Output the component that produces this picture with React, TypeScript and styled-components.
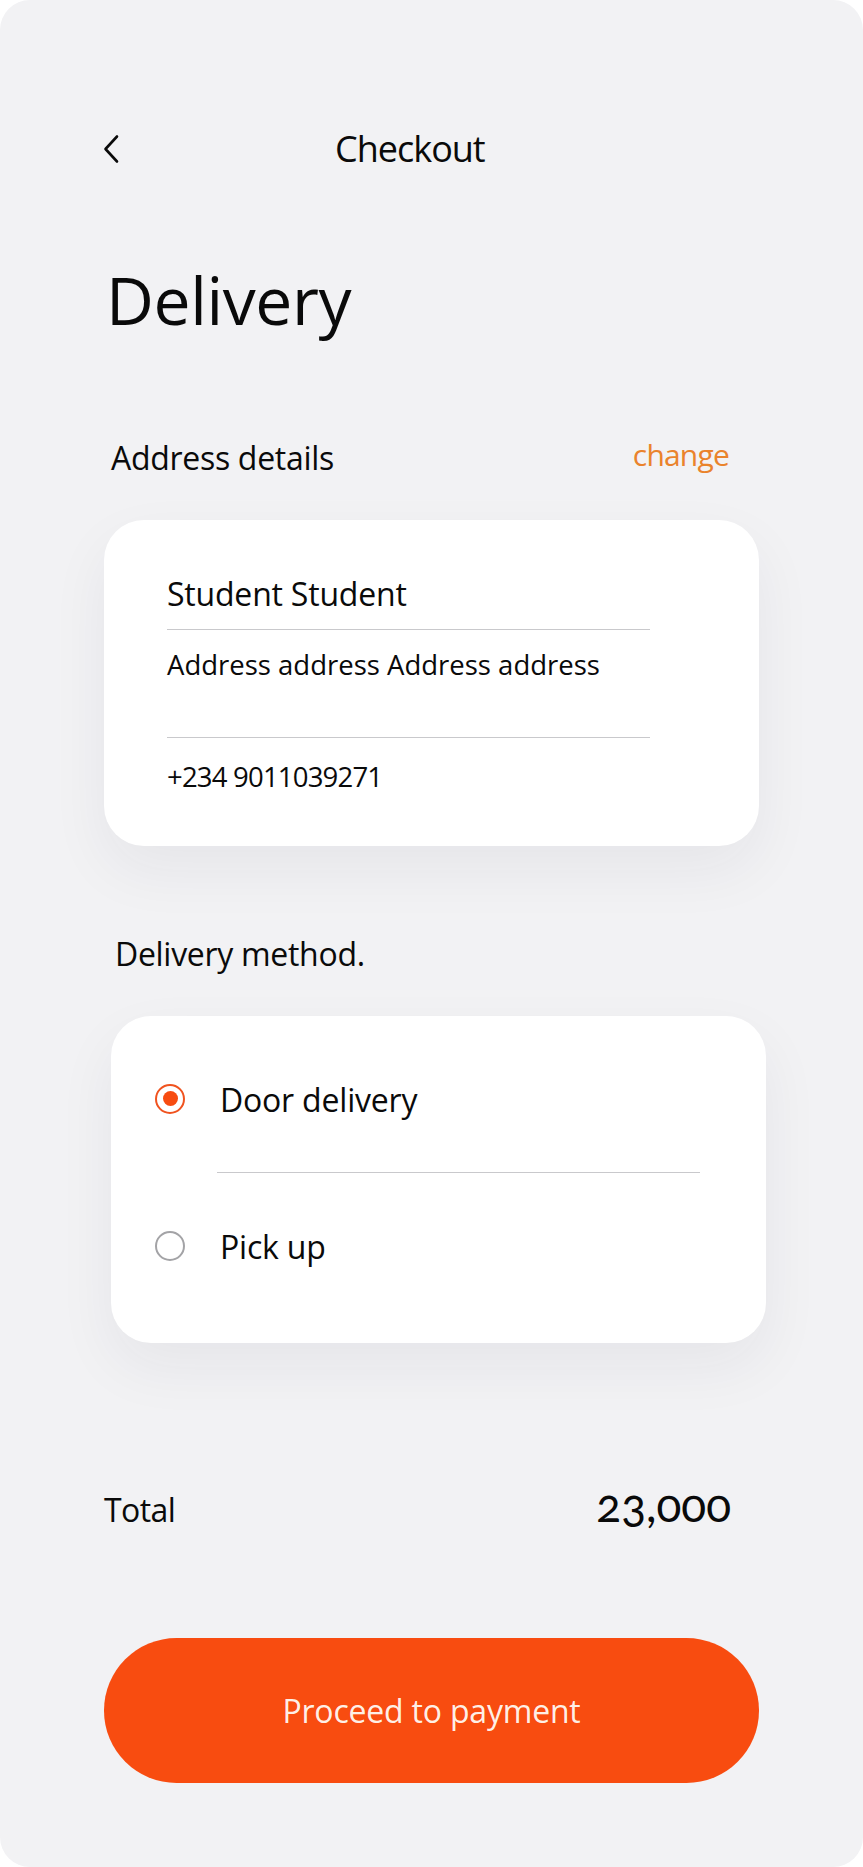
import React, { useState } from "react";
import styled, { createGlobalStyle } from "styled-components";

const GlobalStyle = createGlobalStyle`
  html, body {
    margin: 0;
    padding: 0;
    background: #ffffff;
  }
  body {
    font-family: "Open Sans", "Noto Sans", sans-serif;
    color: #0a0a0a;
  }
  * { box-sizing: border-box; }
`;

const Screen = styled.div`
  width: 863px;
  height: 1867px;
  border-radius: 30px;
  background: #f2f2f4;
  padding: 131px 103px 0 104px;
  display: flex;
  flex-direction: column;
`;

const Header = styled.header`
  display: flex;
  align-items: center;
  height: 36px;
`;

const BackButton = styled.button`
  border: 0;
  background: none;
  padding: 0;
  margin-left: -2px;
  width: 18px;
  height: 30px;
  display: flex;
  align-items: center;
  cursor: pointer;
`;

const Title = styled.h1`
  margin: 0 0 0 215px;
  font-size: 36px;
  line-height: 1;
  font-weight: 400;
  letter-spacing: -1px;
`;

const PageHeading = styled.h2`
  margin: 99px 0 0 2px;
  font-size: 66px;
  line-height: 1;
  font-weight: 400;
  letter-spacing: -0.4px;
`;

const SectionRow = styled.div<{ $top: number; $indent: number }>`
  display: flex;
  align-items: flex-start;
  justify-content: space-between;
  margin-top: ${p => p.$top}px;
  padding-left: ${p => p.$indent}px;
  padding-right: 31px;
`;

const SectionLabel = styled.span`
  font-size: 32px;
  line-height: 1;
  letter-spacing: -0.3px;
`;

const ChangeLink = styled.a`
  margin-top: -2px;
  font-size: 30px;
  line-height: 1;
  color: #ea832c;
  letter-spacing: -0.8px;
  cursor: pointer;
`;

const Card = styled.section<{ $shiftX: number; $pad: string }>`
  margin: 46px ${p => -p.$shiftX + 1}px 0 ${p => p.$shiftX}px;
  background: #ffffff;
  border-radius: 40px;
  padding: ${p => p.$pad};
  box-shadow: 0 24px 60px rgba(30, 30, 60, 0.06);
  display: flex;
  flex-direction: column;
`;

const Name = styled.div`
  font-size: 32px;
  line-height: 1;
  letter-spacing: -0.2px;
`;

const Rule = styled.hr<{ $top: number; $left?: number }>`
  width: 483px;
  margin: ${p => p.$top}px 0 0 ${p => p.$left ?? 0}px;
  border: 0;
  border-top: 1.5px solid #c9c9cc;
`;

const Detail = styled.div<{ $top: number }>`
  margin-top: ${p => p.$top}px;
  font-size: 27.5px;
  line-height: 1;
  letter-spacing: 0;
`;

const Phone = styled(Detail)`
  letter-spacing: -0.8px;
`;

const Option = styled.label<{ $top: number }>`
  display: flex;
  align-items: center;
  gap: 35px;
  margin-top: ${p => p.$top}px;
  font-size: 32px;
  line-height: 1;
  letter-spacing: -0.2px;
  cursor: pointer;
`;

const Radio = styled.span<{ $on: boolean }>`
  width: 30px;
  height: 30px;
  margin-top: -3px;
  border-radius: 50%;
  border: 2.5px solid ${p => (p.$on ? "#f0531f" : "#a3a3a6")};
  display: flex;
  align-items: center;
  justify-content: center;
  flex: none;
  &::after {
    content: "";
    width: 15px;
    height: 15px;
    border-radius: 50%;
    background: #f74c11;
    display: ${p => (p.$on ? "block" : "none")};
  }
`;

const TotalRow = styled.div`
  display: flex;
  align-items: baseline;
  justify-content: space-between;
  margin-top: 139px;
  padding-right: 29px;
`;

const TotalLabel = styled.span`
  font-size: 32px;
  line-height: 1;
  letter-spacing: -0.6px;
`;

const Amount = styled.span`
  font-family: Lato, "Open Sans", sans-serif;
  font-variant-numeric: oldstyle-nums;
  font-size: 46px;
  line-height: 1;
`;

const PayButton = styled.button`
  margin-top: 110px;
  height: 145px;
  width: 655px;
  border: 0;
  border-radius: 73px;
  background: #f84c10;
  color: rgba(255, 250, 245, 0.96);
  font-family: "Open Sans", "Noto Sans", sans-serif;
  font-size: 32px;
  letter-spacing: -0.2px;
  cursor: pointer;
`;

const methods = ["Door delivery", "Pick up"];

export default function App(): JSX.Element {
  const [method, setMethod] = useState<string>(methods[0]);
  return (
    <>
      <GlobalStyle />
      <Screen>
        <Header>
          <BackButton aria-label='Back'>
            <svg width='18' height='30' viewBox='0 0 18 30' fill='none'>
              <polyline points='15,2.5 3.5,15 15,27.5' stroke='#0a0a0a' strokeWidth='2.6' strokeLinecap='round' strokeLinejoin='round' />
            </svg>
          </BackButton>
          <Title>Checkout</Title>
        </Header>
        <PageHeading>Delivery</PageHeading>

        <SectionRow $top={110} $indent={7}>
          <SectionLabel>Address details</SectionLabel>
          <ChangeLink>change</ChangeLink>
        </SectionRow>
        <Card $shiftX={0} $pad='58px 40px 56px 63px'>
          <Name>Student Student</Name>
          <Rule $top={19} />
          <Detail $top={21}>Address address Address address</Detail>
          <Rule $top={58} />
          <Phone $top={25}>+234 9011039271</Phone>
        </Card>

        <SectionRow $top={92} $indent={11}>
          <SectionLabel>Delivery method.</SectionLabel>
        </SectionRow>
        <Card $shiftX={7} $pad='68px 40px 80px 44px'>
          {methods.map((m, i) => (
            <React.Fragment key={m}>
              {i > 0 && <Rule $top={56} $left={62} />}
              <Option $top={i > 0 ? 58 : 0} onClick={() => setMethod(m)}>
                <Radio $on={method === m} />
                {m}
              </Option>
            </React.Fragment>
          ))}
        </Card>

        <TotalRow>
          <TotalLabel>Total</TotalLabel>
          <Amount>23,000</Amount>
        </TotalRow>
        <PayButton>Proceed to payment</PayButton>
      </Screen>
    </>
  );
}
